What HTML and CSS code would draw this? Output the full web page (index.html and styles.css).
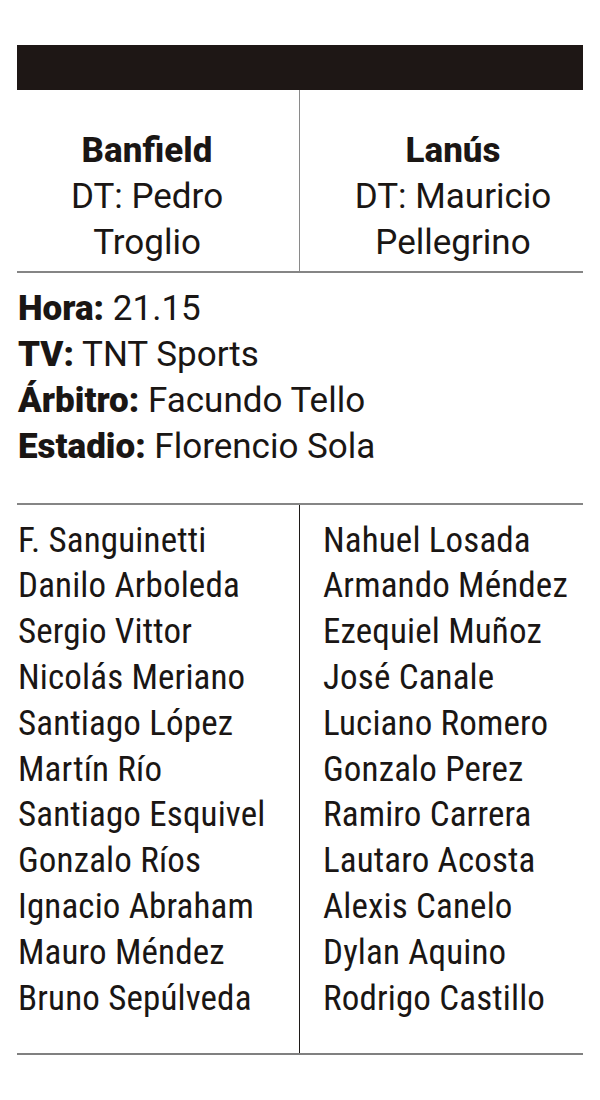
FILE: index.html
```html
<!DOCTYPE html>
<html lang="es">
<head>
<meta charset="utf-8">
<link rel="stylesheet" href="styles.css">
</head>
<body>
<div class="card">
  <div class="bar"></div>
  <div class="teams">
    <div class="team left">
      <div class="name">Banfield</div>
      <div>DT: Pedro<br>Troglio</div>
    </div>
    <div class="team right">
      <div class="name">Lanús</div>
      <div>DT: Mauricio<br>Pellegrino</div>
    </div>
  </div>
  <div class="info">
    <div><b>Hora:</b> 21.15</div>
    <div><b>TV:</b> TNT Sports</div>
    <div><b>Árbitro:</b> Facundo Tello</div>
    <div><b>Estadio:</b> Florencio Sola</div>
  </div>
  <div class="lineups">
    <ul class="col left">
      <li>F. Sanguinetti</li>
      <li>Danilo Arboleda</li>
      <li>Sergio Vittor</li>
      <li>Nicolás Meriano</li>
      <li>Santiago López</li>
      <li>Martín Río</li>
      <li>Santiago Esquivel</li>
      <li>Gonzalo Ríos</li>
      <li>Ignacio Abraham</li>
      <li>Mauro Méndez</li>
      <li>Bruno Sepúlveda</li>
    </ul>
    <ul class="col right">
      <li>Nahuel Losada</li>
      <li>Armando Méndez</li>
      <li>Ezequiel Muñoz</li>
      <li>José Canale</li>
      <li>Luciano Romero</li>
      <li>Gonzalo Perez</li>
      <li>Ramiro Carrera</li>
      <li>Lautaro Acosta</li>
      <li>Alexis Canelo</li>
      <li>Dylan Aquino</li>
      <li>Rodrigo Castillo</li>
    </ul>
  </div>
</div>
</body>
</html>
```

FILE: styles.css
```css
html, body {
  margin: 0;
  padding: 0;
  background: #ffffff;
}
body {
  font-family: Roboto, "Liberation Sans", sans-serif;
  color: #1a1614;
  font-size: 35px;
  line-height: 45.8px;
}
.card {
  margin: 45px 17px 0;
  width: 566px;
}
.bar {
  height: 45px;
  background: #1e1715;
}
.teams {
  display: grid;
  grid-template-columns: 283px 283px;
  border-bottom: 2px solid #858585;
}
.team {
  text-align: center;
  padding: 38px 0 6px;
  white-space: nowrap;
  font-stretch: 100%;
}
.team.left {
  padding-right: 22px;
  border-right: 1.5px solid #8a8a8a;
}
.team.right {
  padding-left: 23px;
}
.team .name {
  font-weight: 800;
}
.info {
  padding: 13px 0 33px 1px;
  border-bottom: 2px solid #858585;
  white-space: nowrap;
}
.info b {
  font-weight: 900;
}
.lineups {
  display: grid;
  grid-template-columns: 283px 283px;
  border-bottom: 2px solid #808080;
}
.col {
  list-style: none;
  margin: 0;
  padding: 13px 0 32px;
  white-space: nowrap;
  font-stretch: 87%;
  letter-spacing: 0.15px;
}
.col.left {
  padding-left: 1px;
  border-right: 1.5px solid #1e1a18;
}
.col.right {
  padding-left: 23px;
}
```
